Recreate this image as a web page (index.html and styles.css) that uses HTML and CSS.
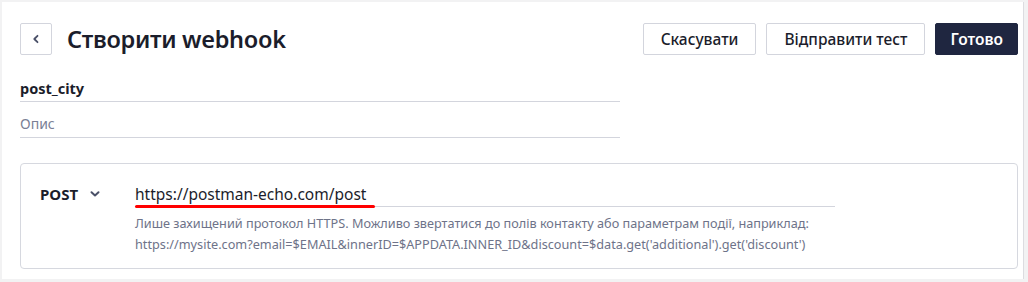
FILE: index.html
```html
<!DOCTYPE html>
<html lang="uk">
<head>
    <meta charset="UTF-8">
    <meta name="viewport" content="width=device-width, initial-scale=1.0">
    <title>Створити webhook</title>
    <link rel="stylesheet" href="styles.css">
</head>
<body>
    <div class="panel">
        <!-- Header -->
        <div class="header">
            <div class="header-left">
                <button class="back-btn" type="button">
                    <svg width="10" height="10" viewBox="0 0 10 10"><path d="M6.5 1.8 L3.3 5 L6.5 8.2" fill="none" stroke="#4a5068" stroke-width="1.8" stroke-linecap="round" stroke-linejoin="round"/></svg>
                </button>
                <h1>Створити webhook</h1>
            </div>
            <div class="actions">
                <button class="btn" type="button">Скасувати</button>
                <button class="btn" type="button">Відправити тест</button>
                <button class="btn btn-primary" type="button">Готово</button>
            </div>
        </div>

        <!-- Name and description -->
        <div class="fields">
            <div class="field field-name">post_city</div>
            <div class="field field-desc">Опис</div>
        </div>

        <!-- Request -->
        <div class="card">
            <div class="method">
                <span>POST</span>
                <svg width="12" height="12" viewBox="0 0 12 12"><path d="M2.5 4.2 L6 7.4 L9.5 4.2" fill="none" stroke="#4a5068" stroke-width="2" stroke-linecap="round" stroke-linejoin="round"/></svg>
            </div>
            <div class="url-block">
                <div class="url-input">
                    <span class="url-text">https://postman-echo.com/post</span>
                    <span class="mark"></span>
                </div>
                <p class="hint">Лише захищений протокол HTTPS. Можливо звертатися до полів контакту або параметрам події, наприклад:<br>https://mysite.com?email=$EMAIL&amp;innerID=$APPDATA.INNER_ID&amp;discount=$data.get('additional').get('discount')</p>
            </div>
        </div>
    </div>
</body>
</html>
```

FILE: styles.css
```css
body {
    margin: 0;
    background-color: #f2f2f3;
    font-family: "Noto Sans", "Open Sans", sans-serif;
    color: #1b1d2b;
}
.panel {
    margin: 2px 4px 3px 2px;
    height: 277px;
    box-sizing: border-box;
    padding: 21px 5px 0 18px;
    background-color: #fff;
    border-right: 1px solid #dcdce0;
}
.header {
    display: flex;
    justify-content: space-between;
    align-items: center;
}
.header-left {
    display: flex;
    align-items: center;
    gap: 15px;
}
.back-btn {
    width: 32px;
    height: 32px;
    padding: 0;
    display: flex;
    align-items: center;
    justify-content: center;
    background: #fff;
    border: 1px solid #d3d5dd;
    border-radius: 2px;
}
h1 {
    margin: 0;
    font-size: 23.5px;
    font-weight: 600;
    letter-spacing: -0.3px;
}
.actions {
    display: flex;
    gap: 10px;
}
.btn {
    height: 32px;
    padding: 0 17px;
    font-family: inherit;
    font-size: 15.5px;
    font-weight: 500;
    color: #1b1d2b;
    background: #fff;
    border: 1px solid #d3d5dd;
    border-radius: 2px;
}
.btn-primary {
    padding: 0 14px;
    background-color: #1f2640;
    border-color: #1f2640;
    color: #fff;
    font-weight: 600;
}
.fields {
    width: 600px;
    margin-top: 22px;
}
.field {
    height: 24px;
    line-height: 22px;
    border-bottom: 1px solid #d3d5dd;
}
.field-name {
    font-size: 14.5px;
    font-weight: 700;
}
.field-desc {
    margin-top: 11px;
    font-size: 14px;
    color: #7a7f95;
}
.card {
    display: flex;
    margin-top: 25px;
    height: 106px;
    box-sizing: border-box;
    padding: 18px 20px 0 19px;
    border: 1px solid #d6d8df;
    border-radius: 4px;
}
.method {
    width: 95px;
    display: flex;
    align-items: center;
    gap: 11px;
    height: 24px;
    font-size: 15px;
    font-weight: 700;
}
.url-block {
    width: 700px;
}
.url-input {
    position: relative;
    height: 24px;
    line-height: 24px;
    border-bottom: 1px solid #d3d5dd;
    font-size: 15.5px;
}
.mark {
    position: absolute;
    left: 0;
    bottom: -2px;
    width: 240px;
    height: 3px;
    border-radius: 2px;
    background-color: #f00;
}
.hint {
    margin: 6px 0 0;
    font-size: 12.7px;
    line-height: 21px;
    color: #6e7389;
}
```
